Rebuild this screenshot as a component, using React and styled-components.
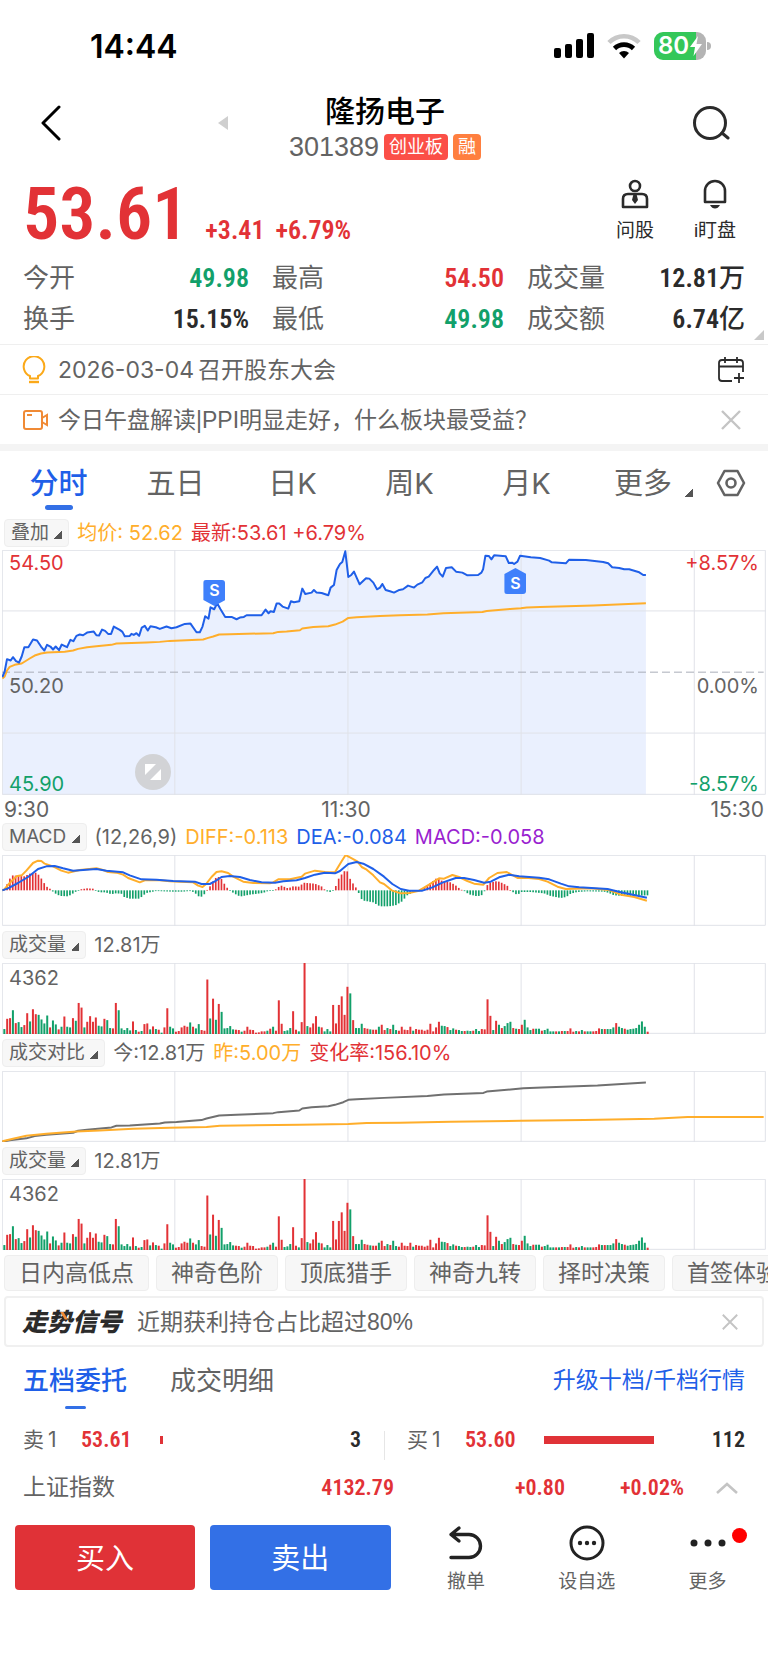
import { useState } from 'react'
import styled, { createGlobalStyle, css } from 'styled-components'

const RED = '#e23236'
const GREEN = '#12a06a'
const BLUE = '#1f5fe8'
const ORANGE = '#ffae2b'
const GREY = '#636363'
const DARK = '#2b2b2b'

const tones = { red: RED, green: GREEN, blue: BLUE, orange: ORANGE, purple: '#9a1fd0', grey: GREY, dark: DARK }

// every panel shares the same x axis, STEP is one minute of trading
const X0 = 7
const CHART_W = 2290
const STEP = 8.57

const pricePoints = '8,712 15,695 22,658 33,662 40,652 49,664 58,668 66,650 74,622 86,622 100,599 112,602 124,620 134,632 142,615 152,620 160,629 168,620 178,631 186,614 202,622 212,600 221,604 230,588 240,584 250,586 262,578 282,575 290,586 298,587 307,569 316,573 325,582 334,582 342,560 360,570 368,576 375,589 390,588 395,582 402,585 410,580 418,588 426,563 435,558 444,572 452,559 468,562 480,567 500,560 515,565 530,562 555,552 572,551 590,577 600,577 608,560 616,529 626,536 632,502 643,508 652,490 662,508 676,531 695,531 710,538 720,533 732,531 740,526 785,526 797,509 806,520 812,514 822,516 830,491 838,491 848,500 865,506 873,484 882,487 898,484 907,446 916,462 935,458 942,450 950,458 965,459 985,466 992,443 1002,435 1010,390 1020,372 1027,366 1036,334 1045,411 1054,405 1062,395 1079,433 1098,415 1108,416 1120,428 1131,448 1140,443 1147,432 1157,450 1170,454 1182,458 1198,450 1209,448 1224,437 1242,443 1252,434 1267,427 1276,414 1286,410 1302,390 1311,380 1319,400 1328,410 1338,384 1355,382 1368,395 1387,398 1402,406 1434,405 1444,398 1449,388 1456,347 1466,348 1474,358 1482,346 1517,349 1526,369 1536,368 1542,372 1552,365 1560,347 1592,352 1620,354 1647,362 1655,367 1697,370 1707,359 1757,360 1809,366 1824,370 1836,382 1857,384 1872,388 1887,388 1917,397 1929,405 1937,405'

const averagePoints = '8,716 15,710 22,692 30,681 45,675 66,671 90,656 105,647 124,641 142,638 195,636 220,632 235,627 262,622 290,619 335,615 350,611 440,608 480,606 510,603 610,599 625,594 640,590 658,584 690,583 820,580 835,576 860,575 900,571 907,566 940,561 985,559 1005,554 1028,545 1045,534 1070,532 1140,528 1200,526 1282,524 1330,520 1447,516 1460,513 1530,507 1562,505 1580,503 1620,501 1780,497 1937,490'

const diffPoints = '8,227 14,224 30,205 50,185 66,182 80,168 100,145 115,138 125,139 135,147 160,155 185,168 205,174 240,166 290,161 310,166 325,172 350,174 370,180 385,190 420,203 435,197 480,197 510,200 540,201 580,203 595,213 608,217 618,209 635,187 650,172 665,170 685,175 700,186 730,201 760,205 810,206 820,203 835,194 870,194 905,186 915,177 945,168 975,172 1005,173 1025,140 1037,121 1050,128 1072,140 1085,157 1100,165 1120,182 1140,203 1152,208 1177,228 1202,236 1227,235 1257,228 1287,210 1317,191 1332,192 1357,181 1377,187 1402,199 1422,207 1450,210 1467,190 1492,175 1520,172 1552,190 1577,189 1617,193 1642,201 1672,216 1697,223 1772,221 1827,226 1862,240 1902,247 1940,258'

const deaPoints = '8,227 25,221 55,205 85,187 115,163 140,155 165,154 190,161 220,168 250,166 290,163 320,168 370,173 390,182 425,194 470,195 520,199 585,201 605,208 630,208 645,200 665,187 690,184 720,187 750,196 785,203 825,204 850,200 890,197 915,190 945,180 975,174 1005,176 1020,169 1045,148 1070,142 1090,147 1120,163 1152,186 1177,208 1202,223 1227,228 1267,228 1297,218 1327,204 1367,190 1392,190 1422,196 1452,204 1472,201 1497,188 1527,180 1557,185 1617,189 1647,194 1682,207 1707,215 1737,218 1822,223 1862,233 1902,241 1940,249'

const todayPoints = '8,334 30,330 80,324 105,317 140,313 220,307 235,301 262,298 335,291 350,286 390,285 480,279 495,276 530,275 605,269 620,264 658,255 710,253 820,248 835,245 898,240 907,234 935,230 985,227 1005,223 1030,215 1045,208 1070,206 1152,202 1282,196 1332,192 1450,187 1460,183 1570,173 1627,171 1792,165 1937,156'

const yesterdayPoints = '8,333 40,325 80,316 140,310 230,303 300,300 400,295 510,292 620,290 660,286 900,283 1045,281 1100,278 1200,277 1352,274 1562,271 1752,269 1962,265 2062,260 2290,260'

// histogram turning points: [x, height], below zero is drawn downwards
const macdCurve = [
    [14, 3], [22, 17], [31, 35], [40, 45], [57, 43], [74, 42], [91, 50], [110, 53], [120, 44], [130, 28], [140, 12], [150, 6],
    [158, -2], [165, -8], [175, -14], [185, -17], [205, -18], [215, -13], [225, -6], [235, -1], [243, 3], [262, 6], [280, 5],
    [290, -2], [300, -6], [318, -6], [336, -12], [345, -9], [365, -10], [374, -20], [390, -25], [420, -25], [430, -16], [440, -8],
    [455, -5], [470, -2], [490, -3], [520, -4], [550, -4], [570, -2], [585, -6], [592, -15], [602, -21], [612, -15], [620, -1],
    [628, 6], [636, 22], [648, 37], [655, 41], [665, 35], [675, 18], [683, 7], [692, -2], [705, -10], [715, -16], [725, -18],
    [750, -13], [790, -8], [805, -2], [825, -1], [832, 8], [845, 14], [865, 6], [880, 12], [900, 11], [910, 23], [945, 20],
    [965, 12], [978, -1], [988, -6], [1000, -1], [1007, 10], [1016, 34], [1027, 50], [1040, 64], [1048, 40], [1056, 25],
    [1065, 14], [1075, -3], [1082, -24], [1092, -31], [1120, -36], [1140, -48], [1167, -48], [1187, -45], [1207, -33],
    [1222, -15], [1242, -5], [1257, -1], [1267, 6], [1282, 14], [1297, 26], [1312, 38], [1327, 28], [1352, 24], [1367, 15],
    [1382, 3], [1395, -3], [1407, -12], [1432, -18], [1447, -14], [1452, -8], [1458, 10], [1467, 22], [1492, 28], [1507, 22],
    [1522, 14], [1530, 1], [1537, -4], [1552, -14], [1564, -5], [1592, -5], [1632, -9], [1652, -17], [1682, -23], [1699, -20],
    [1712, -10], [1732, -5], [1762, -3], [1812, -4], [1827, -8], [1842, -15], [1872, -17], [1945, -15],
]

// traded volume by minute, minus for a minute that closed lower
const volumes = [
    -15, 46, 48, -72, 33, -36, -21, 27, 63, -38, 75, 60, -58, -44, -32, -56, 20, -41, -29, 14, -22, 53, -22, -20, 48, -40,
    94, 80, -20, 37, 54, 37, 50, -25, -23, 46, -42, -18, 17, 94, -72, -17, -12, -18, -11, 38, -12, 7, -9, 30, 32, -14, 23,
    -15, 13, -4, 20, 78, -22, -17, 7, 9, 20, 25, 22, -35, 22, -17, -30, 12, 10, 165, -47, 107, -43, 91, -67, -17, -18, -24,
    -14, 13, 12, -7, 10, 22, 13, 12, 4, 5, 8, 8, -10, 16, -22, 10, 102, 31, -9, -11, -18, 69, 13, -8, 36, 215, -24, 20, 32,
    54, -22, 20, -8, -15, -8, 88, 32, 88, 114, 58, 143, -123, 42, -18, -18, -31, 18, 16, -14, 13, 13, -22, 28, 12, -18, 15,
    -28, -12, 10, 22, 13, 12, 22, -10, 15, 13, 13, 10, 13, 31, 8, 20, 37, -25, -24, 21, -12, -17, 13, -12, -9, 9, -10, -9,
    10, -15, -9, 15, 14, 105, 55, -12, 40, -28, 18, -24, -33, -37, 18, -16, 15, 28, -43, -20, -12, 16, -16, -16, 10, -12,
    -16, -8, -8, 8, -8, 9, -9, 9, 17, 7, -9, 8, -12, 8, -8, -8, 8, 9, 17, -15, 15, -15, -15, -20, 33, -22, -18, 16, -13,
    -15, -16, -18, -28, -38, -22, 7,
]

const macdAt = (x) => {
    const i = macdCurve.findIndex(([px]) => px >= x)
    if (i <= 0) return macdCurve[i === 0 ? 0 : macdCurve.length - 1][1]
    const [x1, y1] = macdCurve[i - 1]
    const [x2, y2] = macdCurve[i]
    return y1 + ((y2 - y1) * (x - x1)) / (x2 - x1)
}

const Line = ({ points, color }) => (
    <polyline points={points} fill="none" stroke={color} strokeWidth="2" strokeLinejoin="round" vectorEffect="non-scaling-stroke" />
)

const Grid = ({ top, height, rows = [] }) => (
    <g stroke="#e0e2e8" strokeWidth="1" fill="none">
        <rect x={X0 + 1} y={top + 1} width={CHART_W - 3} height={height - 3} vectorEffect="non-scaling-stroke" />
        {[525, 1044, 1563, 2082].map(x => <path key={x} d={`M${x} ${top}v${height}`} vectorEffect="non-scaling-stroke" />)}
        {rows.map(y => <path key={y} d={`M${X0} ${y}h${CHART_W}`} vectorEffect="non-scaling-stroke" />)}
    </g>
)

const PriceChart = () => (
    <Plot viewBox={`${X0} 330 ${CHART_W} 736`} preserveAspectRatio="none" role="img" aria-label="分时">
        <polygon points={`8,1066 ${pricePoints} 1937,1066`} fill="#eaf0fe" />
        <Grid top={330} height={736} rows={[513, 880]} />
        <path d="M7 697H2290" stroke="#a9adb8" strokeDasharray="8 4" vectorEffect="non-scaling-stroke" />
        <Line points={averagePoints} color={ORANGE} />
        <Line points={pricePoints} color={BLUE} />
    </Plot>
)

const MacdChart = () => (
    <Plot viewBox={`${X0} 121 ${CHART_W} 213`} preserveAspectRatio="none" role="img" aria-label="MACD">
        <Grid top={121} height={213} />
        {volumes.map((_, i) => {
            const x = 14 + i * STEP
            const v = macdAt(x)
            return <rect key={i} x={x - 3} y={v > 0 ? 227 - v : 227} width="5" height={Math.max(Math.abs(v), 2)} fill={v > 0 ? RED : GREEN} />
        })}
        <Line points={diffPoints} color={ORANGE} />
        <Line points={deaPoints} color={BLUE} />
    </Plot>
)

const VolumeChart = () => (
    <Plot viewBox={`${X0} 0 ${CHART_W} 215`} preserveAspectRatio="none" role="img" aria-label="成交量">
        <Grid top={0} height={215} />
        {volumes.map((v, i) => (
            <rect key={i} x={11 + i * STEP} y={215 - Math.abs(v)} width="6" height={Math.abs(v)} fill={v > 0 ? RED : GREEN} />
        ))}
    </Plot>
)

const CompareChart = () => (
    <Plot viewBox={`${X0} 121 ${CHART_W} 214`} preserveAspectRatio="none" role="img" aria-label="成交对比">
        <Grid top={121} height={214} />
        <Line points={todayPoints} color="#707070" />
        <Line points={yesterdayPoints} color={ORANGE} />
    </Plot>
)

const CloseIcon = ({ size }) => (
    <svg width={size} height={size} viewBox="0 0 20 20" fill="none" stroke="#c4c4c4" strokeWidth="2.4">
        <path d="M1 1l18 18M19 1L1 19" />
    </svg>
)

const stats = [
    ['今开', '49.98', 'green'], ['最高', '54.50', 'red'], ['成交量', '12.81', 'dark', '万'],
    ['换手', '15.15%', 'dark'], ['最低', '49.98', 'green'], ['成交额', '6.74', 'dark', '亿'],
]

const periods = ['分时', '五日', '日K', '周K', '月K']

const panels = [
    {
        name: 'MACD', chart: MacdChart,
        legend: [['(12,26,9)', 'grey'], ['DIFF:-0.113', 'orange'], ['DEA:-0.084', 'blue'], ['MACD:-0.058', 'purple']],
    },
    { name: '成交量', chart: VolumeChart, top: '4362', legend: [['12.81万', 'grey']] },
    { name: '成交对比', chart: CompareChart, legend: [['今:12.81万', 'grey'], ['昨:5.00万', 'orange'], ['变化率:156.10%', 'red']] },
    { name: '成交量', chart: VolumeChart, top: '4362', legend: [['12.81万', 'grey']] },
]

const signals = ['日内高低点', '神奇色阶', '顶底猎手', '神奇九转', '择时决策', '首签体验']

const App = () => {
    const [period, setPeriod] = useState('分时')
    const [book, setBook] = useState('五档委托')

    return (
        <>
            <GlobalStyle />
            <Page>
                <StatusBar>
                    <Clock>14:44</Clock>
                    <StatusIcons>
                        <svg width="40" height="26" viewBox="0 0 40 26">
                            <rect x="0" y="15" width="7" height="10" rx="2" />
                            <rect x="11" y="11" width="7" height="14" rx="2" />
                            <rect x="22" y="6" width="7" height="19" rx="2" />
                            <rect x="33" y="0" width="7" height="25" rx="2" />
                        </svg>
                        <svg width="34" height="26" viewBox="0 0 34 26" fill="none">
                            <path d="M2 9.5a21 21 0 0 1 30 0" stroke="#c8c8c8" strokeWidth="4.6" />
                            <path d="M7.5 15.500a13.500 13.500 0 0 1 19 0" stroke="#000" strokeWidth="4.6" />
                            <path d="M17 25.500l-5-5.500a7 7 0 0 1 10 0z" fill="#000" />
                        </svg>
                        <Battery>
                            <Charge>80</Charge>
                            <svg width="14" height="20" viewBox="0 0 14 20"><path d="M9 0L1 11h5L4.500 20L13 8H7.500z" fill="#fff" /></svg>
                        </Battery>
                    </StatusIcons>
                </StatusBar>

                <Header>
                    <IconButton aria-label="返回">
                        <svg width="22" height="36" viewBox="0 0 22 36" fill="none" stroke="#000" strokeWidth="3" strokeLinecap="round" strokeLinejoin="round">
                            <path d="M19 2L3 18l16 16" />
                        </svg>
                    </IconButton>
                    <IconButton aria-label="上一只">
                        <svg width="10" height="14" viewBox="0 0 10 14"><path d="M10 0v14L0 7z" fill="#cfcfcf" /></svg>
                    </IconButton>
                    <Heading>
                        <Name>隆扬电子</Name>
                        <Code>
                            301389
                            <Badge $color="#fb4f47">创业板</Badge>
                            <Badge $color="#ff7f3f">融</Badge>
                        </Code>
                    </Heading>
                    <span />
                    <IconButton aria-label="搜索">
                        <svg width="38" height="36" viewBox="0 0 38 36" fill="none" stroke="#2b2b2b" strokeWidth="3" strokeLinecap="round">
                            <circle cx="18" cy="18" r="15.5" />
                            <path d="M30 28l6 5" />
                        </svg>
                    </IconButton>
                </Header>

                <Quote>
                    <Prices>
                        <Price>53.61</Price>
                        <Change>+3.41</Change>
                        <Change>+6.79%</Change>
                    </Prices>
                    <Tools>
                        <Tool>
                            <svg width="28" height="30" viewBox="0 0 28 30" fill="none" stroke={DARK} strokeWidth="2.6">
                                <circle cx="14" cy="7" r="5" />
                                <path d="M2 28V20q0-5 5-5h14q5 0 5 5v8z" strokeLinejoin="round" />
                                <path d="M12.500 15h3l1.500 6-3 4-3-4z" fill={DARK} stroke="none" />
                            </svg>
                            问股
                        </Tool>
                        <Tool>
                            <svg width="28" height="30" viewBox="0 0 28 30" fill="none" stroke={DARK} strokeWidth="2.6">
                                <path d="M4 23V12a10 10 0 0 1 20 0v11z" strokeLinejoin="round" />
                                <path d="M9 26h10q-2 3.500-5 3.500T9 26z" fill={DARK} stroke="none" />
                            </svg>
                            i盯盘
                        </Tool>
                    </Tools>
                </Quote>

                <Stats>
                    {stats.map(([label, value, tone, unit]) => (
                        <Stat key={label}>
                            <dt>{label}</dt>
                            <Figure $tone={tone}>{value}{unit && <Unit>{unit}</Unit>}</Figure>
                        </Stat>
                    ))}
                    <MoreCorner viewBox="0 0 10 10"><path d="M10 0v10H0z" fill="#c9c9c9" /></MoreCorner>
                </Stats>

                <Notice>
                    <svg width="26" height="28" viewBox="0 0 26 28" fill="none" stroke="#fba919" strokeWidth="2">
                        <path d="M8 22.500v-2.500A10.300 10.300 0 1 1 16 20v2.500z" strokeLinejoin="round" />
                        <path d="M7 26h10" strokeWidth="2.4" />
                    </svg>
                    <NoticeText href="#meeting"><Latin>2026-03-04</Latin>召开股东大会</NoticeText>
                    <IconButton aria-label="添加日程">
                        <svg width="26" height="26" viewBox="0 0 26 26" fill="none" stroke={DARK} strokeWidth="1.8">
                            <path d="M14 24H4q-3 0-3-3V6q0-3 3-3h18q3 0 3 3v9M1 9.500h24M7 0v6M19 0v6M21 16v10M16 21h10" />
                        </svg>
                    </IconButton>
                </Notice>
                <Notice>
                    <svg width="26" height="22" viewBox="0 0 26 22" fill="none" stroke="#f08a35" strokeWidth="2">
                        <rect x="2" y="2" width="18" height="18" rx="2" />
                        <path d="M20 9l5-3v10l-5-3M5 6h5" />
                    </svg>
                    <NoticeText href="#news">今日午盘解读|PPI明显走好，什么板块最受益？</NoticeText>
                    <IconButton aria-label="关闭"><CloseIcon size={20} /></IconButton>
                </Notice>

                <Periods>
                    {periods.map(p => (
                        <Period key={p} $active={p === period} onClick={() => setPeriod(p)}>{p}</Period>
                    ))}
                    <Period>更多<Corner $tab /></Period>
                    <Settings aria-label="设置">
                        <svg width="30" height="28" viewBox="0 0 30 28" fill="none" stroke={GREY} strokeWidth="2.6">
                            <path d="M8.500 2h13l6.500 12-6.500 12h-13L2 14z" strokeLinejoin="round" />
                            <circle cx="15" cy="14" r="4.5" />
                        </svg>
                    </Settings>
                </Periods>

                <Legend $first>
                    <Chip>叠加 <Corner /></Chip>
                    <Value $tone="orange">均价: 52.62</Value>
                    <Value $tone="red">最新:53.61 +6.79%</Value>
                </Legend>
                <ChartBox $height={245}>
                    <PriceChart />
                    <Scale $tone="red" $top="0">54.50</Scale>
                    <Scale $tone="grey" $top="50%">50.20</Scale>
                    <Scale $tone="green" $top="221px">45.90</Scale>
                    <Scale $tone="red" $top="0" $right>+8.57%</Scale>
                    <Scale $tone="grey" $top="50%" $right>0.00%</Scale>
                    <Scale $tone="green" $top="221px" $right>-8.57%</Scale>
                    <Marker $left="27.8%" $top="30px">S</Marker>
                    <Marker $left="67.2%" $top="18px" $up>S</Marker>
                    <Expand aria-label="全屏">
                        <svg width="16" height="16" viewBox="0 0 16 16" fill="#fff"><path d="M0 0h11L0 11zM16 16H5L16 5z" /></svg>
                    </Expand>
                </ChartBox>
                <Times><span>9:30</span><span>11:30</span><span>15:30</span></Times>

                {panels.map(({ name, chart: Chart, top, legend }, i) => (
                    <section key={i}>
                        <Legend>
                            <Chip>{name} <Corner /></Chip>
                            {legend.map(([text, tone]) => <Value key={text} $tone={tone}>{text}</Value>)}
                        </Legend>
                        <ChartBox $height={71}>
                            <Chart />
                            {top && <Scale $tone="grey" $top="2px">{top}</Scale>}
                        </ChartBox>
                    </section>
                ))}

                <Signals>
                    {signals.map(s => <Signal key={s}>{s}</Signal>)}
                </Signals>

                <TrendCard>
                    <TrendLogo>走势信号</TrendLogo>
                    <TrendText>近期获利持仓占比超过80%</TrendText>
                    <IconButton aria-label="关闭"><CloseIcon size={16} /></IconButton>
                </TrendCard>

                <BookTabs>
                    {['五档委托', '成交明细'].map(b => (
                        <BookTab key={b} $active={b === book} onClick={() => setBook(b)}>{b}</BookTab>
                    ))}
                    <Upgrade href="#level2">升级十档/千档行情</Upgrade>
                </BookTabs>

                <Orders>
                    <Order>
                        <Side>卖<b>1</b></Side>
                        <Num $tone="red">53.61</Num>
                        <Bar><i style={{ width: `${3 / 112 * 100}%` }} /></Bar>
                        <Num $tone="dark">3</Num>
                    </Order>
                    <Order>
                        <Side>买<b>1</b></Side>
                        <Num $tone="red">53.60</Num>
                        <Bar><i style={{ width: '100%' }} /></Bar>
                        <Num $tone="dark">112</Num>
                    </Order>
                </Orders>

                <IndexRow>
                    <span>上证指数</span>
                    <Num $tone="red">4132.79</Num>
                    <Num $tone="red">+0.80</Num>
                    <Num $tone="red">+0.02%</Num>
                    <IconButton aria-label="展开">
                        <svg width="22" height="12" viewBox="0 0 22 12" fill="none" stroke="#c4c4c4" strokeWidth="2.6"><path d="M1 11L11 2l10 9" /></svg>
                    </IconButton>
                </IndexRow>

                <ActionBar>
                    <Trade $color="#e03237">买入</Trade>
                    <Trade $color="#3370e6">卖出</Trade>
                    <Actions>
                        <Action>
                            <svg width="36" height="36" viewBox="0 0 36 36" fill="none" stroke="#222" strokeWidth="3.4" strokeLinecap="round" strokeLinejoin="round">
                                <path d="M11 3L3 9.500l8 6.500M3 9.500h18a11.500 11.500 0 0 1 0 23H3" />
                            </svg>
                            撤单
                        </Action>
                        <Action>
                            <svg width="36" height="36" viewBox="0 0 36 36" fill="#222">
                                <circle cx="18" cy="18" r="16" fill="none" stroke="#222" strokeWidth="3" />
                                <circle cx="11" cy="18" r="2.2" /><circle cx="18" cy="18" r="2.2" /><circle cx="25" cy="18" r="2.2" />
                            </svg>
                            设自选
                        </Action>
                        <Action>
                            <svg width="36" height="36" viewBox="0 0 36 36" fill="#222">
                                <circle cx="4" cy="18" r="3.5" /><circle cx="18" cy="18" r="3.5" /><circle cx="32" cy="18" r="3.5" />
                            </svg>
                            更多
                            <Dot />
                        </Action>
                    </Actions>
                </ActionBar>
            </Page>
        </>
    )
}

const GlobalStyle = createGlobalStyle`
    * {
        box-sizing: border-box;
    }
    body {
        margin: 0;
        background: #fff;
        font-family: "Liberation Sans", "Noto Sans CJK SC", sans-serif;
        line-height: 1.2;
        color: ${GREY};
    }
    button {
        margin: 0;
        padding: 0;
        border: 0;
        background: none;
        color: inherit;
        font: inherit;
        cursor: pointer;
    }
    svg {
        display: block;
        flex: none;
    }
`

const inter = css`
    font-family: Inter, "Noto Sans CJK SC", sans-serif;
`

const digits = css`
    font-family: "Roboto Condensed", Roboto, "Noto Sans CJK SC", sans-serif;
    font-weight: 600;
`

const Page = styled.main`
    width: 100%;
    overflow: hidden;
    padding-bottom: 72px;
`

const StatusBar = styled.div`
    display: flex;
    justify-content: space-between;
    align-items: center;
    height: 88px;
    padding: 4px 57px 0 90px;
`

const Clock = styled.div`
    ${inter}
    font-size: 32px;
    line-height: 40px;
    padding-top: 2px;
    font-weight: 600;
    color: #000;
`

const StatusIcons = styled.div`
    display: flex;
    align-items: center;
    gap: 13px;
`

const Battery = styled.div`
    position: relative;
    display: flex;
    align-items: center;
    width: 52px;
    height: 28px;
    padding-left: 4px;
    border-radius: 9px;
    background: linear-gradient(90deg, #34c759 80%, #b4b4b4 80%);
    margin-right: 5px;

    &::after {
        content: '';
        position: absolute;
        right: -5px;
        top: 10px;
        width: 4px;
        height: 8px;
        border-radius: 0 4px 4px 0;
        background: #b4b4b4;
    }
`

const Charge = styled.span`
    ${inter}
    font-size: 24px;
    font-weight: 600;
    color: #fff;
`

const IconButton = styled.button`
    display: flex;
    justify-content: center;
    align-items: center;
`

const Header = styled.header`
    display: grid;
    grid-template-columns: 38px 1fr auto 1fr 38px;
    height: 72px;
    padding: 0 38px 0 40px;

    > button {
        height: 70px;
    }
    > button:first-child {
        justify-content: flex-start;
    }
    > button:nth-child(2) {
        justify-self: end;
        width: 132px;
    }
`

const Heading = styled.div`
    padding-top: 6px;
    text-align: center;
`

const Name = styled.h1`
    margin: 0 0 4px;
    font-size: 30px;
    line-height: 36px;
    font-weight: 500;
    color: #000;
`

const Code = styled.div`
    display: flex;
    align-items: center;
    gap: 5px;
    font-size: 27px;
    line-height: 26px;
`

const Badge = styled.span`
    height: 26px;
    padding: 0 5px;
    border-radius: 4px;
    background: ${props => props.$color};
    color: #fff;
    font-size: 18px;
    line-height: 26px;
`

const Quote = styled.section`
    display: flex;
    justify-content: space-between;
    height: 96px;
    padding: 0 23px;
`

const Prices = styled.div`
    display: flex;
    align-items: baseline;
    color: ${RED};
`

const Price = styled.strong`
    ${digits}
    font-size: 72px;
    line-height: 110px;
    margin-right: 17px;
`

const Change = styled.span`
    ${digits}
    font-size: 26px;
    margin-right: 11px;
`

const Tools = styled.div`
    display: flex;
    padding-top: 19px;
`

const Tool = styled.button`
    display: flex;
    flex-direction: column;
    align-items: center;
    gap: 10px;
    width: 80px;
    height: 64px;
    font-size: 19px;
    line-height: 24px;
    color: ${DARK};

    &:last-child {
        margin-right: -10px;
    }
`

const Stats = styled.dl`
    position: relative;
    display: grid;
    grid-template-columns: 226fr 232fr 218fr;
    column-gap: 23px;
    margin: 0;
    padding: 2px 23px 4px;
`

const Stat = styled.div`
    display: flex;
    justify-content: space-between;
    align-items: center;
    height: 41px;
    font-size: 26px;
`

const Figure = styled.dd`
    ${digits}
    display: flex;
    align-items: center;
    margin: 0;
    font-size: 26px;
    color: ${props => tones[props.$tone]};
`

const Unit = styled.span`
    font-weight: 500;
`

const MoreCorner = styled.svg`
    position: absolute;
    right: 4px;
    bottom: 4px;
    width: 10px;
    height: 10px;
`

const Notice = styled.div`
    display: flex;
    align-items: center;
    height: 50px;
    padding: 0 24px 0 22px;
    border-top: 1px solid #efefef;

    button {
        width: 26px;
        height: 40px;
    }
`

const NoticeText = styled.a`
    flex: 1;
    margin-left: 10px;
    font-size: 23px;
    line-height: 30px;
    color: inherit;
    text-decoration: none;
    white-space: nowrap;
`

const Latin = styled.span`
    ${inter}
    margin-right: 4px;
`

const Periods = styled.nav`
    display: grid;
    grid-template-columns: repeat(5, 117fr) 116fr 67fr;
    height: 71px;
    border-top: 7px solid #f4f4f4;
`

const Period = styled.button`
    ${inter}
    position: relative;
    padding-top: 2px;
    font-size: 29px;
    color: ${props => props.$active ? BLUE : GREY};
    font-weight: ${props => props.$active ? 500 : 400};

    ${props => props.$active && css`
        &::after {
            content: '';
            position: absolute;
            left: calc(50% - 14px);
            bottom: 5px;
            width: 28px;
            height: 5px;
            border-radius: 3px;
            background: #3370e6;
        }
    `}
`

const Settings = styled(IconButton)`
    padding-right: 7px;
`

const Corner = styled.i`
    display: inline-block;
    width: 8px;
    height: 8px;
    background: linear-gradient(135deg, transparent 50%, #555 50%);

    ${props => props.$tab && css`
        position: absolute;
        right: 8px;
        bottom: 18px;
    `}
`

const Legend = styled.div`
    ${inter}
    display: flex;
    align-items: center;
    gap: 8px;
    height: ${props => props.$first ? 35 : 37}px;
    padding-left: ${props => props.$first ? 4 : 2}px;
    font-size: 20px;
    white-space: nowrap;
`

const Chip = styled.button`
    height: 28px;
    padding: 0 6px;
    border: 1px solid #eee;
    border-radius: 4px;
    background: #f7f7f7;
    font-size: 19px;
    line-height: 24px;
`

const Value = styled.span`
    color: ${props => tones[props.$tone]};
`

const ChartBox = styled.div`
    position: relative;
    height: ${props => props.$height}px;
    margin: 0 2px;
`

const Plot = styled.svg`
    width: 100%;
    height: 100%;
`

const Scale = styled.span`
    ${inter}
    position: absolute;
    top: ${props => props.$top};
    ${props => props.$right ? 'right: 7px;' : 'left: 7px;'}
    font-size: 20px;
    line-height: 27px;
    color: ${props => tones[props.$tone]};
`

const Marker = styled.span`
    ${inter}
    position: absolute;
    left: ${props => props.$left};
    top: ${props => props.$top};
    width: 22px;
    height: 26px;
    margin-left: -11px;
    padding-top: ${props => props.$up ? 5 : 0}px;
    border-radius: 3px;
    background: #3f80fb;
    clip-path: ${props => props.$up
        ? 'polygon(0 6px, 50% 0, 100% 6px, 100% 100%, 0 100%)'
        : 'polygon(0 0, 100% 0, 100% 20px, 50% 100%, 0 20px)'};
    color: #fff;
    font-size: 16px;
    font-weight: 600;
    line-height: 20px;
    text-align: center;
`

const Expand = styled(IconButton)`
    position: absolute;
    left: 133px;
    bottom: 5px;
    width: 36px;
    height: 36px;
    border-radius: 50%;
    background: #d2d3d6;
`

const Times = styled.div`
    ${inter}
    display: grid;
    grid-template-columns: 1fr auto 1fr;
    height: 23px;
    padding: 0 4px;
    font-size: 21px;
    line-height: 29px;

    span:nth-child(2) {
        margin-right: 76px;
    }
    span:last-child {
        text-align: right;
    }
`

const Signals = styled.div`
    display: flex;
    gap: 7px;
    padding: 5px 0 5px 4px;
`

const Signal = styled.button`
    flex: none;
    height: 36px;
    padding: 0 14px;
    border: 1px solid #eee;
    border-radius: 4px;
    background: #f7f7f7;
    font-size: 23px;
    line-height: 34px;
`

const TrendCard = styled.div`
    display: flex;
    align-items: center;
    height: 51px;
    margin: 0 4px;
    padding: 0 24px 0 16px;
    border: 2px solid #f0f0f0;
    border-radius: 4px;
`

const TrendLogo = styled.strong`
    position: relative;
    font-size: 25px;
    font-weight: 900;
    font-style: italic;
    color: ${DARK};

    &::after {
        content: '';
        position: absolute;
        left: 38px;
        top: 5px;
        width: 8px;
        height: 8px;
        background: #f08a35;
        clip-path: polygon(0 0, 40% 0, 100% 100%, 60% 100%);
    }
`

const TrendText = styled.span`
    flex: 1;
    margin-left: 15px;
    font-size: 23px;
    line-height: 30px;
`

const BookTabs = styled.nav`
    display: flex;
    align-items: center;
    height: 66px;
    padding: 0 23px;
`

const BookTab = styled.button`
    position: relative;
    height: 66px;
    padding-top: 3px;
    margin-right: 43px;
    font-size: 26px;
    font-weight: ${props => props.$active ? 500 : 400};
    color: ${props => props.$active ? BLUE : GREY};

    ${props => props.$active && css`
        &::after {
            content: '';
            position: absolute;
            left: calc(50% - 10px);
            bottom: 4px;
            width: 21px;
            height: 3px;
            border-radius: 2px;
            background: #3370e6;
        }
    `}
`

const Upgrade = styled.a`
    ${inter}
    margin-left: auto;
    padding-top: 2px;
    font-size: 23px;
    color: ${BLUE};
    text-decoration: none;
`

const Orders = styled.div`
    display: grid;
    grid-template-columns: 1fr 1fr;
    height: 54px;
`

const Order = styled.div`
    display: grid;
    grid-template-columns: 58px 79px minmax(0, 110px) 1fr;
    align-items: center;
    padding: 0 23px;

    & + & {
        background: linear-gradient(#e6e6e6, #e6e6e6) 0 18px / 1px 29px no-repeat;
    }
    > :last-child {
        text-align: right;
    }
`

const Side = styled.span`
    ${inter}
    font-size: 21px;

    b {
        margin-left: 4px;
        font-weight: 400;
    }
`

const Num = styled.span`
    ${digits}
    font-size: 22px;
    color: ${props => tones[props.$tone]};
`

const Bar = styled.div`
    height: 8px;

    i {
        display: block;
        height: 100%;
        background: #e03237;
    }
`

const IndexRow = styled.div`
    display: grid;
    grid-template-columns: 225fr 146fr 171fr 119fr 54fr;
    align-items: center;
    height: 40px;
    padding: 2px 30px 0 23px;
    font-size: 23px;
    text-align: right;
    white-space: nowrap;

    > :first-child {
        text-align: left;
    }
    > button {
        justify-content: flex-end;
    }
`

const ActionBar = styled.footer`
    display: flex;
    gap: 15px;
    padding: 18px 0 0 15px;
`

const Trade = styled.button`
    flex: 180 1 0;
    height: 65px;
    padding-top: 3px;
    border-radius: 4px;
    background: ${props => props.$color};
    color: #fff;
    font-size: 29px;
`

const Actions = styled.div`
    display: flex;
    flex: 362 1 0;
`

const Action = styled.button`
    position: relative;
    flex: 1;
    display: flex;
    flex-direction: column;
    align-items: center;
    gap: 9px;
    font-size: 19px;
    line-height: 24px;
`

const Dot = styled.i`
    position: absolute;
    left: calc(50% + 24px);
    top: 3px;
    width: 15px;
    height: 15px;
    border-radius: 50%;
    background: #f00;
`

export default App
